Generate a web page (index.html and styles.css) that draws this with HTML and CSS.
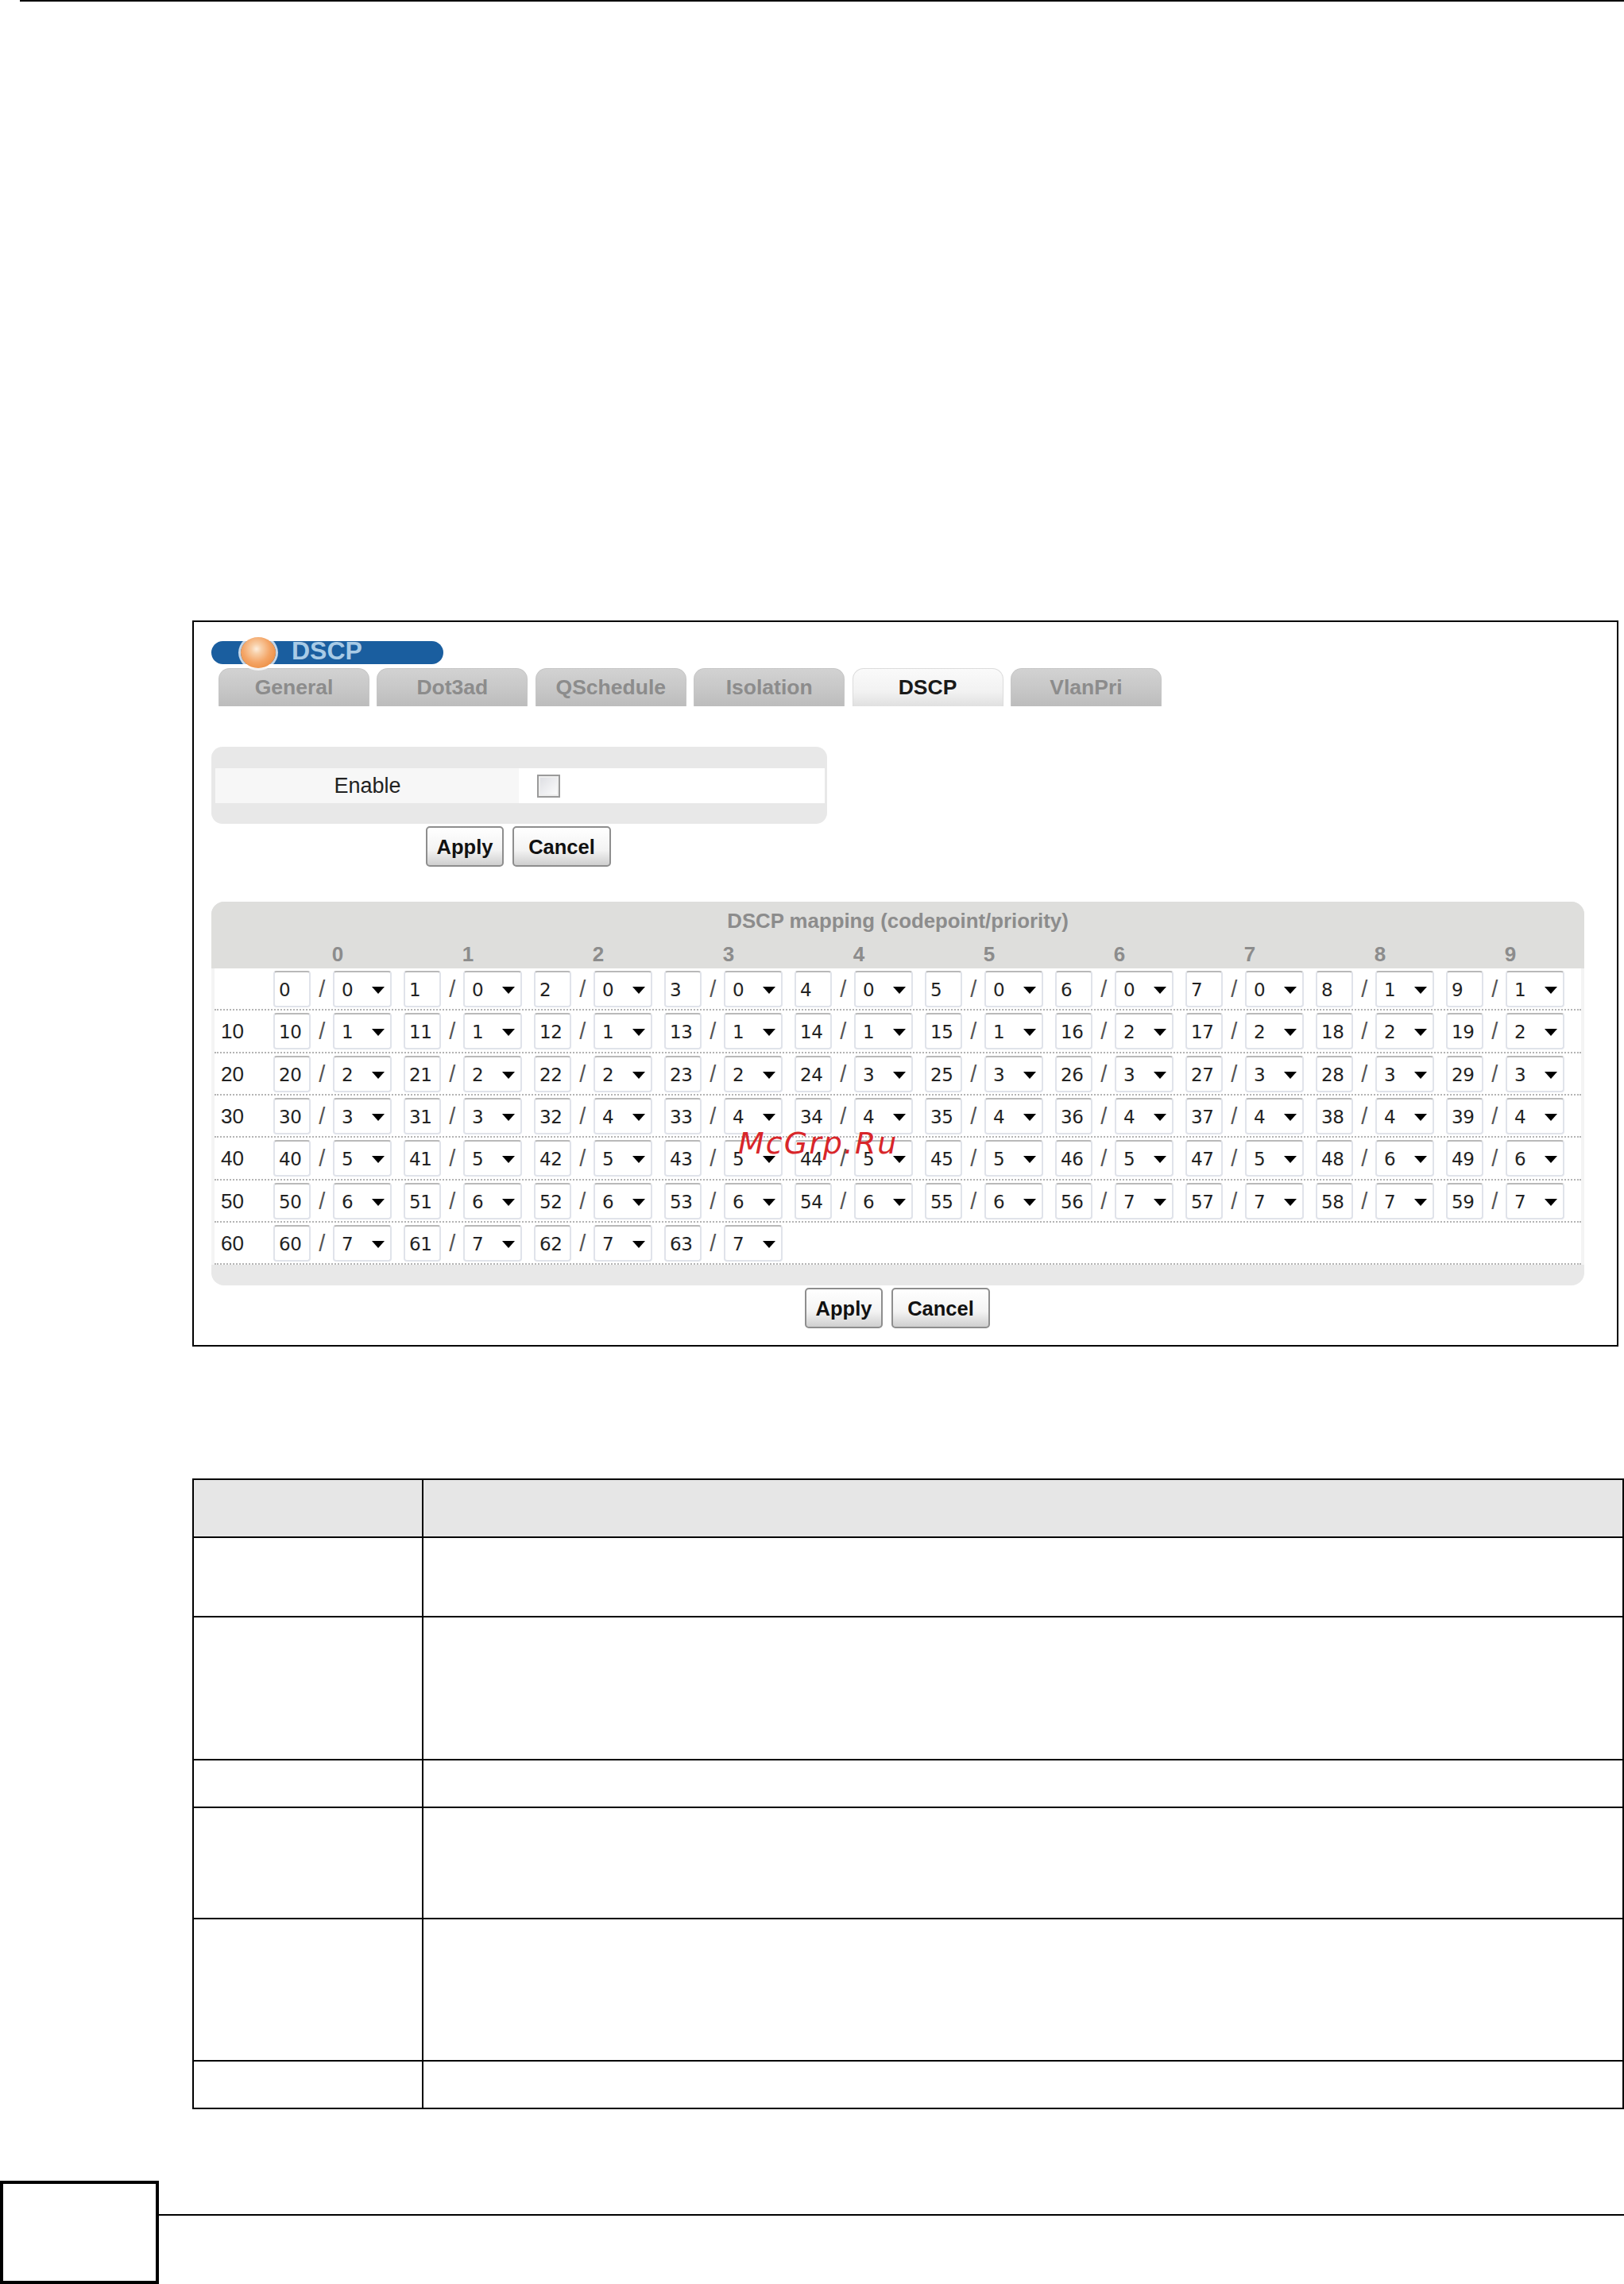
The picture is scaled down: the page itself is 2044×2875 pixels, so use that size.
FILE: index.html
```html
<!DOCTYPE html>
<html lang="en">
<head>
<meta charset="utf-8">
<title>DSCP</title>
<link rel="stylesheet" href="styles.css">
</head>
<body>
<div class="top-rule"></div>
<section class="shot">
  <div class="title-bar"><span class="orb"></span><span class="title-text">DSCP</span></div>
  <nav class="tabs">
    <div class="tab">General</div>
    <div class="tab">Dot3ad</div>
    <div class="tab">QSchedule</div>
    <div class="tab">Isolation</div>
    <div class="tab tab-active">DSCP</div>
    <div class="tab">VlanPri</div>
  </nav>
  <div class="enable-panel">
    <div class="enable-row">
      <div class="enable-label">Enable</div>
      <div class="enable-field"><span class="checkbox"></span></div>
    </div>
  </div>
  <div class="actions actions-top"><button class="btn btn-apply">Apply</button><button class="btn btn-cancel">Cancel</button></div>
  <div class="map-panel">
    <div class="map-head">
      <div class="map-title">DSCP mapping (codepoint/priority)</div>
      <div class="map-cols"><span>0</span><span>1</span><span>2</span><span>3</span><span>4</span><span>5</span><span>6</span><span>7</span><span>8</span><span>9</span></div>
    </div>
    <div class="map-body">
      <div class="map-row"><div class="row-label"></div>
        <div class="cell"><span class="num">0</span><span class="sep">/</span><span class="sel">0</span></div>
        <div class="cell"><span class="num">1</span><span class="sep">/</span><span class="sel">0</span></div>
        <div class="cell"><span class="num">2</span><span class="sep">/</span><span class="sel">0</span></div>
        <div class="cell"><span class="num">3</span><span class="sep">/</span><span class="sel">0</span></div>
        <div class="cell"><span class="num">4</span><span class="sep">/</span><span class="sel">0</span></div>
        <div class="cell"><span class="num">5</span><span class="sep">/</span><span class="sel">0</span></div>
        <div class="cell"><span class="num">6</span><span class="sep">/</span><span class="sel">0</span></div>
        <div class="cell"><span class="num">7</span><span class="sep">/</span><span class="sel">0</span></div>
        <div class="cell"><span class="num">8</span><span class="sep">/</span><span class="sel">1</span></div>
        <div class="cell"><span class="num">9</span><span class="sep">/</span><span class="sel">1</span></div>
      </div>
      <div class="map-row"><div class="row-label">10</div>
        <div class="cell"><span class="num">10</span><span class="sep">/</span><span class="sel">1</span></div>
        <div class="cell"><span class="num">11</span><span class="sep">/</span><span class="sel">1</span></div>
        <div class="cell"><span class="num">12</span><span class="sep">/</span><span class="sel">1</span></div>
        <div class="cell"><span class="num">13</span><span class="sep">/</span><span class="sel">1</span></div>
        <div class="cell"><span class="num">14</span><span class="sep">/</span><span class="sel">1</span></div>
        <div class="cell"><span class="num">15</span><span class="sep">/</span><span class="sel">1</span></div>
        <div class="cell"><span class="num">16</span><span class="sep">/</span><span class="sel">2</span></div>
        <div class="cell"><span class="num">17</span><span class="sep">/</span><span class="sel">2</span></div>
        <div class="cell"><span class="num">18</span><span class="sep">/</span><span class="sel">2</span></div>
        <div class="cell"><span class="num">19</span><span class="sep">/</span><span class="sel">2</span></div>
      </div>
      <div class="map-row"><div class="row-label">20</div>
        <div class="cell"><span class="num">20</span><span class="sep">/</span><span class="sel">2</span></div>
        <div class="cell"><span class="num">21</span><span class="sep">/</span><span class="sel">2</span></div>
        <div class="cell"><span class="num">22</span><span class="sep">/</span><span class="sel">2</span></div>
        <div class="cell"><span class="num">23</span><span class="sep">/</span><span class="sel">2</span></div>
        <div class="cell"><span class="num">24</span><span class="sep">/</span><span class="sel">3</span></div>
        <div class="cell"><span class="num">25</span><span class="sep">/</span><span class="sel">3</span></div>
        <div class="cell"><span class="num">26</span><span class="sep">/</span><span class="sel">3</span></div>
        <div class="cell"><span class="num">27</span><span class="sep">/</span><span class="sel">3</span></div>
        <div class="cell"><span class="num">28</span><span class="sep">/</span><span class="sel">3</span></div>
        <div class="cell"><span class="num">29</span><span class="sep">/</span><span class="sel">3</span></div>
      </div>
      <div class="map-row"><div class="row-label">30</div>
        <div class="cell"><span class="num">30</span><span class="sep">/</span><span class="sel">3</span></div>
        <div class="cell"><span class="num">31</span><span class="sep">/</span><span class="sel">3</span></div>
        <div class="cell"><span class="num">32</span><span class="sep">/</span><span class="sel">4</span></div>
        <div class="cell"><span class="num">33</span><span class="sep">/</span><span class="sel">4</span></div>
        <div class="cell"><span class="num">34</span><span class="sep">/</span><span class="sel">4</span></div>
        <div class="cell"><span class="num">35</span><span class="sep">/</span><span class="sel">4</span></div>
        <div class="cell"><span class="num">36</span><span class="sep">/</span><span class="sel">4</span></div>
        <div class="cell"><span class="num">37</span><span class="sep">/</span><span class="sel">4</span></div>
        <div class="cell"><span class="num">38</span><span class="sep">/</span><span class="sel">4</span></div>
        <div class="cell"><span class="num">39</span><span class="sep">/</span><span class="sel">4</span></div>
      </div>
      <div class="map-row"><div class="row-label">40</div>
        <div class="cell"><span class="num">40</span><span class="sep">/</span><span class="sel">5</span></div>
        <div class="cell"><span class="num">41</span><span class="sep">/</span><span class="sel">5</span></div>
        <div class="cell"><span class="num">42</span><span class="sep">/</span><span class="sel">5</span></div>
        <div class="cell"><span class="num">43</span><span class="sep">/</span><span class="sel">5</span></div>
        <div class="cell"><span class="num">44</span><span class="sep">/</span><span class="sel">5</span></div>
        <div class="cell"><span class="num">45</span><span class="sep">/</span><span class="sel">5</span></div>
        <div class="cell"><span class="num">46</span><span class="sep">/</span><span class="sel">5</span></div>
        <div class="cell"><span class="num">47</span><span class="sep">/</span><span class="sel">5</span></div>
        <div class="cell"><span class="num">48</span><span class="sep">/</span><span class="sel">6</span></div>
        <div class="cell"><span class="num">49</span><span class="sep">/</span><span class="sel">6</span></div>
      </div>
      <div class="map-row"><div class="row-label">50</div>
        <div class="cell"><span class="num">50</span><span class="sep">/</span><span class="sel">6</span></div>
        <div class="cell"><span class="num">51</span><span class="sep">/</span><span class="sel">6</span></div>
        <div class="cell"><span class="num">52</span><span class="sep">/</span><span class="sel">6</span></div>
        <div class="cell"><span class="num">53</span><span class="sep">/</span><span class="sel">6</span></div>
        <div class="cell"><span class="num">54</span><span class="sep">/</span><span class="sel">6</span></div>
        <div class="cell"><span class="num">55</span><span class="sep">/</span><span class="sel">6</span></div>
        <div class="cell"><span class="num">56</span><span class="sep">/</span><span class="sel">7</span></div>
        <div class="cell"><span class="num">57</span><span class="sep">/</span><span class="sel">7</span></div>
        <div class="cell"><span class="num">58</span><span class="sep">/</span><span class="sel">7</span></div>
        <div class="cell"><span class="num">59</span><span class="sep">/</span><span class="sel">7</span></div>
      </div>
      <div class="map-row"><div class="row-label">60</div>
        <div class="cell"><span class="num">60</span><span class="sep">/</span><span class="sel">7</span></div>
        <div class="cell"><span class="num">61</span><span class="sep">/</span><span class="sel">7</span></div>
        <div class="cell"><span class="num">62</span><span class="sep">/</span><span class="sel">7</span></div>
        <div class="cell"><span class="num">63</span><span class="sep">/</span><span class="sel">7</span></div>
      </div>
    </div>
  </div>
  <div class="actions actions-bottom"><button class="btn btn-apply">Apply</button><button class="btn btn-cancel">Cancel</button></div>
  <div class="watermark">McGrp.Ru</div>
</section>
<table class="desc">
  <tr class="r-head"><th class="col-a"></th><th></th></tr>
  <tr class="r-100"><td></td><td></td></tr>
  <tr class="r-180"><td></td><td></td></tr>
  <tr class="r-60"><td></td><td></td></tr>
  <tr class="r-140"><td></td><td></td></tr>
  <tr class="r-179"><td></td><td></td></tr>
  <tr class="r-60"><td></td><td></td></tr>
</table>
<footer class="foot">
  <div class="foot-box"></div>
  <div class="foot-rule"></div>
</footer>
</body>
</html>
```
FILE: styles.css
```css
html, body { margin: 0; padding: 0; background: #fff; }
body { width: 2044px; height: 2875px; overflow: hidden; font-family: "Liberation Sans", Arial, sans-serif; color: #222; }

.top-rule { height: 2px; margin-left: 25px; background: #000; }

.shot {
  position: relative;
  box-sizing: border-box;
  width: 1795px;
  height: 914px;
  margin: 779px 0 0 242px;
  padding: 24px 0 0 22px;
  border: 2px solid #000;
}

.title-bar {
  position: relative;
  width: 292px;
  height: 29px;
  border-radius: 15px;
  background: #1a5e9f;
  overflow: visible;
}
.orb {
  position: absolute;
  left: 37px;
  top: -5px;
  width: 44px;
  height: 39px;
  border-radius: 50%;
  background: radial-gradient(ellipse at 45% 38%, #fdeedd 0, #f8cfa8 18%, #f4a566 50%, #e67f2c 100%);
  box-shadow: 0 0 0 3px rgba(255, 255, 255, .75);
}
.title-text {
  display: block;
  padding-left: 101px;
  font-size: 32px;
  font-weight: bold;
  line-height: 25px;
  color: #a9cbe6;
}

.tabs { display: flex; gap: 9.4px; margin: 5px 0 0 9px; }
.tab {
  box-sizing: border-box;
  width: 190px;
  height: 48px;
  border: 1px solid #c6c6c6;
  border-bottom: 0;
  border-radius: 14px 14px 0 0;
  background: linear-gradient(#d2d2d2, #c6c6c6 60%, #bcbcbc);
  font-size: 26.5px;
  font-weight: bold;
  line-height: 47px;
  text-align: center;
  color: #8c8c8c;
}
.tab-active { background: linear-gradient(#fafafa, #f2f2f2 60%, #e0e0e0); border-color: #dcdcdc; color: #1a1a1a; }

.enable-panel {
  box-sizing: border-box;
  width: 775px;
  height: 97px;
  margin-top: 51px;
  padding: 27px 3px 0 5px;
  border-radius: 14px;
  background: #e8e8e8;
}
.enable-row { display: flex; height: 44px; background: #fff; }
.enable-label { width: 382px; background: #f7f7f7; font-size: 27px; line-height: 45px; text-align: center; padding-left: 1px; box-sizing: border-box; }
.enable-field { display: flex; align-items: center; padding-left: 23px; }
.checkbox {
  box-sizing: border-box;
  width: 29px;
  height: 29px;
  border: 2px solid #9a9a9a;
  background: linear-gradient(135deg, #dcdde2, #fdfdfd);
  box-shadow: inset 0 0 0 2px #eee;
}

.actions { display: flex; gap: 11px; }
.actions-top { margin-top: 3px; padding-left: 270px; }
.actions-bottom { margin-top: 3px; padding-left: 747px; }
.btn {
  box-sizing: border-box;
  height: 51px;
  padding: 2px 0 0;
  border: 2px solid #8e8e8e;
  border-radius: 5px;
  background: linear-gradient(#fff, #f3f3f3 60%, #cfcfcf);
  font-family: "Liberation Sans", Arial, sans-serif;
  font-size: 25.5px;
  font-weight: bold;
  color: #111;
}
.btn-apply { width: 98px; }
.btn-cancel { width: 124px; }

.map-panel {
  box-sizing: border-box;
  width: 1728px;
  height: 483px;
  margin-top: 44px;
  border-radius: 16px;
  background: #e8e8e8;
  overflow: hidden;
}
.map-head { height: 84px; background: #dededc; font-weight: bold; color: #8c8c8c; }
.map-title { height: 48px; font-size: 25.8px; line-height: 48px; text-align: center; }
.map-cols { display: flex; height: 36px; padding-left: 77px; font-size: 26px; line-height: 36px; }
.map-cols span { width: 164px; text-align: center; }
.map-body { margin: 0; border: solid #f4f4f4; border-width: 0 4px; }
.map-row {
  box-sizing: border-box;
  display: grid;
  grid-template-columns: 74px repeat(10, 164px);
  height: 53.33px;
  padding-top: 3px;
  border-bottom: 2px dotted #b4b4b4;
  background: #fff;
}
.row-label { padding: 3px 0 0 8px; font-size: 26px; line-height: 40px; }
.cell { display: flex; height: 46px; font-family: "DejaVu Sans", Verdana, sans-serif; font-size: 23px; letter-spacing: -.5px; color: #222; }
.num, .sel {
  box-sizing: border-box;
  height: 46px;
  border: 2px solid #e0e3ea;
  border-top-color: #b9b9b9;
  border-radius: 4px;
  background: #fff;
  line-height: 44px;
}
.num { width: 47px; padding-left: 5px; }
.sep { width: 28px; text-align: center; font-family: "Liberation Sans", Arial, sans-serif; font-size: 29px; line-height: 46px; color: #555; }
.sel { position: relative; width: 74px; padding-left: 9px; }
.sel::after {
  content: "";
  position: absolute;
  right: 7px;
  top: 18px;
  border-style: solid;
  border-width: 9px 8.5px 0;
  border-color: #000 transparent transparent;
}

.watermark {
  position: absolute;
  left: 685px;
  top: 638px;
  font-family: "DejaVu Sans", Verdana, sans-serif;
  font-style: italic;
  font-size: 38px;
  line-height: 37px;
  letter-spacing: 2px;
  color: #d8262a;
}

.desc {
  width: 1802px;
  margin: 166px 0 0 242px;
  table-layout: fixed;
  border-collapse: collapse;
  border: 2px solid #000;
}
.desc th, .desc td { padding: 0; border: 2px solid #000; }
.desc th { background: #e6e6e6; }
.col-a { width: 287px; }
.r-head { height: 73px; }
.r-100 { height: 100px; }
.r-180 { height: 180px; }
.r-60 { height: 60px; }
.r-140 { height: 140px; }
.r-179 { height: 179px; }

.foot { display: flex; margin-top: 90px; }
.foot-box { box-sizing: border-box; width: 200px; height: 130px; border: 4px solid #000; }
.foot-rule { flex: 1; height: 2px; margin-top: 42px; background: #000; }
```
